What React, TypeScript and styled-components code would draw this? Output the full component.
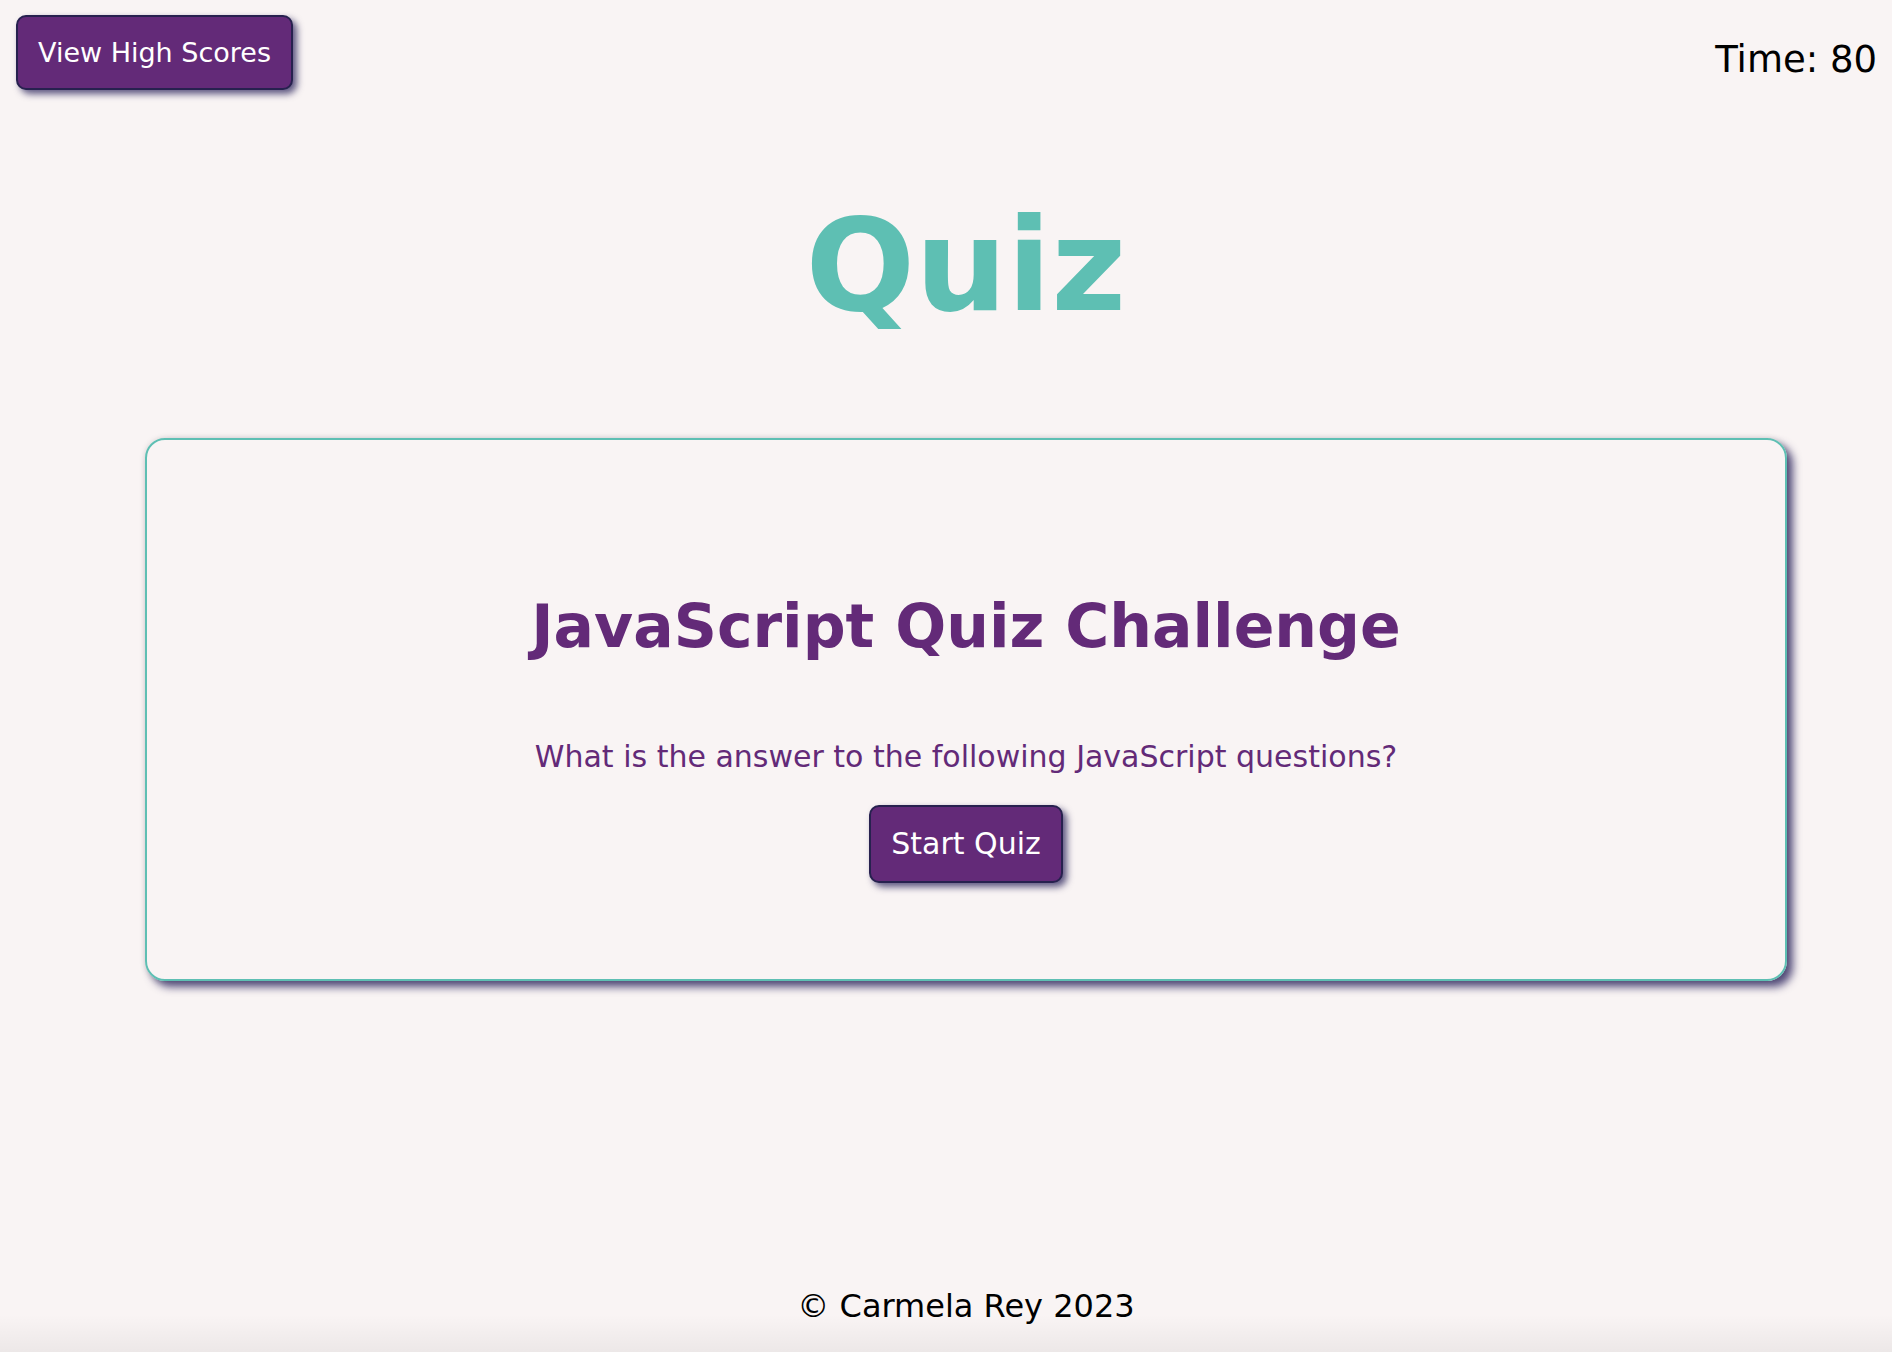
import styled, { createGlobalStyle } from "styled-components";

const GlobalStyle = createGlobalStyle`
    html, body {
        margin: 0;
        padding: 0;
        background: #f9f4f4;
        font-family: "DejaVu Sans", Verdana, sans-serif;
    }
`

export default function App() {
    return (
        <>
            <GlobalStyle/>
            <Page>
                <Header>
                    <PurpleButton $size={27} $pad="22px 20px">View High Scores</PurpleButton>
                    <Timer>Time: 80</Timer>
                </Header>

                <Main>
                    <Title>Quiz</Title>
                    <Card>
                        <CardTitle>JavaScript Quiz Challenge</CardTitle>
                        <Question>What is the answer to the following JavaScript questions?</Question>
                        <PurpleButton $size={30} $pad="22px 20px">Start Quiz</PurpleButton>
                    </Card>
                </Main>

                <Footer>© Carmela Rey 2023</Footer>
            </Page>
        </>
    )
}

const Page = styled.div`
    min-height: 100vh;
    display: flex;
    flex-direction: column;
    box-sizing: border-box;
`
const Header = styled.header`
    display: flex;
    justify-content: space-between;
    align-items: flex-start;
    padding: 15px 15px 0 16px;
`
const PurpleButton = styled.button<{ $size: number; $pad: string }>`
    font-family: "DejaVu Sans", Verdana, sans-serif;
    font-size: ${p => p.$size}px;
    line-height: 1;
    padding: ${p => p.$pad};
    color: #ffffff;
    background: #632a78;
    border: 2px solid #27214f;
    border-radius: 10px;
    box-shadow: 4px 4px 7px rgba(40, 34, 90, 0.75);
    cursor: pointer;
`
const Timer = styled.div`
    font-size: 37px;
    line-height: 1;
    margin-top: 26px;
    color: #000;
`
const Main = styled.main`
    flex: 1;
    display: flex;
    flex-direction: column;
    align-items: center;
    padding-left: 40px;
`
const Title = styled.h1`
    margin: 111px 0 108px;
    font-size: 129px;
    line-height: 1;
    font-weight: bold;
    color: #5ebfb3;
`
const Card = styled.section`
    width: 1642px;
    box-sizing: border-box;
    display: flex;
    flex-direction: column;
    align-items: center;
    padding: 156px 0 96px;
    border: 2px solid #5ebfb3;
    border-radius: 20px;
    box-shadow: 0 0 6px rgba(0, 0, 0, 0.12), 6px 6px 9px rgba(45, 38, 95, 0.8);
`
const CardTitle = styled.h2`
    margin: 0;
    font-size: 60px;
    line-height: 1;
    font-weight: bold;
    color: #632a78;
`
const Question = styled.p`
    margin: 86px 0 33px;
    font-size: 30px;
    line-height: 1;
    color: #632a78;
`
const Footer = styled.footer`
    padding: 0 0 30px 40px;
    text-align: center;
    font-size: 32px;
    line-height: 1;
    color: #000;
    background: linear-gradient(to bottom, rgba(0, 0, 0, 0) 40%, rgba(0, 0, 0, 0.05));
`
